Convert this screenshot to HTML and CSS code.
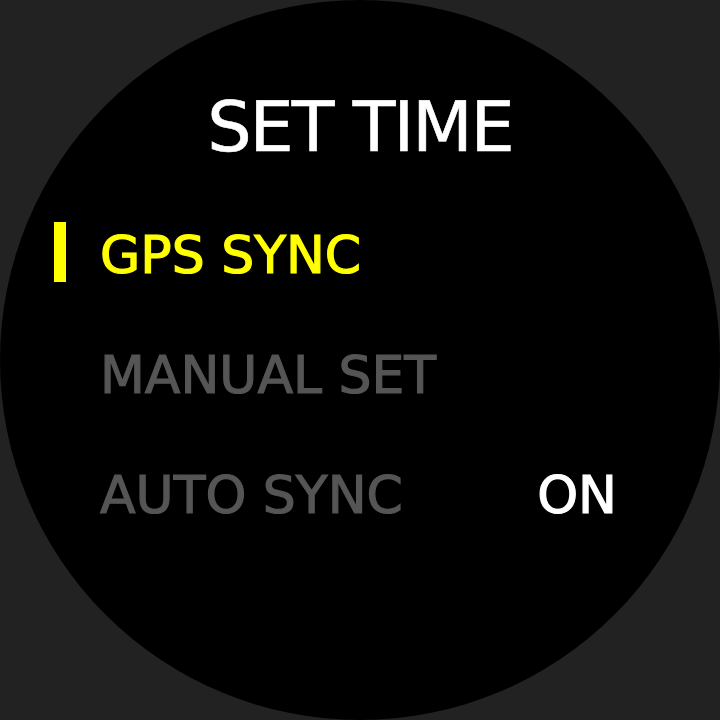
FILE: index.html
```html
<!DOCTYPE html>
<html>
<head>
<meta charset="utf-8">
<link rel="stylesheet" href="styles.css">
</head>
<body>
<div class="watch">
  <h1 class="title">SET TIME</h1>
  <ul class="menu">
    <li class="row selected"><span class="marker"></span><span class="label">GPS SYNC</span></li>
    <li class="row"><span class="marker"></span><span class="label">MANUAL SET</span></li>
    <li class="row"><span class="marker"></span><span class="label">AUTO SYNC</span><span class="value">ON</span></li>
  </ul>
</div>
</body>
</html>
```
FILE: styles.css
```css
html, body {
  margin: 0;
  padding: 0;
  background: #222222;
}
body {
  width: 720px;
  height: 720px;
  overflow: hidden;
  font-family: "DejaVu Sans", "Liberation Sans", sans-serif;
}
.watch {
  width: 720px;
  height: 720px;
  border-radius: 50%;
  background: #000;
  box-sizing: border-box;
  padding-top: 92px;
  display: flex;
  flex-direction: column;
}
.title {
  margin: 0;
  font-size: 70px;
  line-height: 70px;
  font-weight: normal;
  color: #fff;
  text-align: center;
  letter-spacing: -2px;
  -webkit-text-stroke: 0.6px #fff;
}
.menu {
  list-style: none;
  margin: 33px 0 0 0;
  padding: 0;
}
.row {
  display: flex;
  height: 120px;
  line-height: 120px;
  font-size: 52px;
  padding-left: 54px;
  padding-right: 103px;
  color: #555555;
  -webkit-text-stroke: 1.2px currentColor;
}
.marker {
  width: 12px;
  height: 60px;
  margin-top: 27px;
  margin-right: 34px;
  flex: none;
}
.selected .marker {
  background: #ffff00;
}
.selected .label {
  color: #ffff00;
}
.label {
  flex: 1;
  white-space: nowrap;
}
.value {
  color: #fff;
}
```
